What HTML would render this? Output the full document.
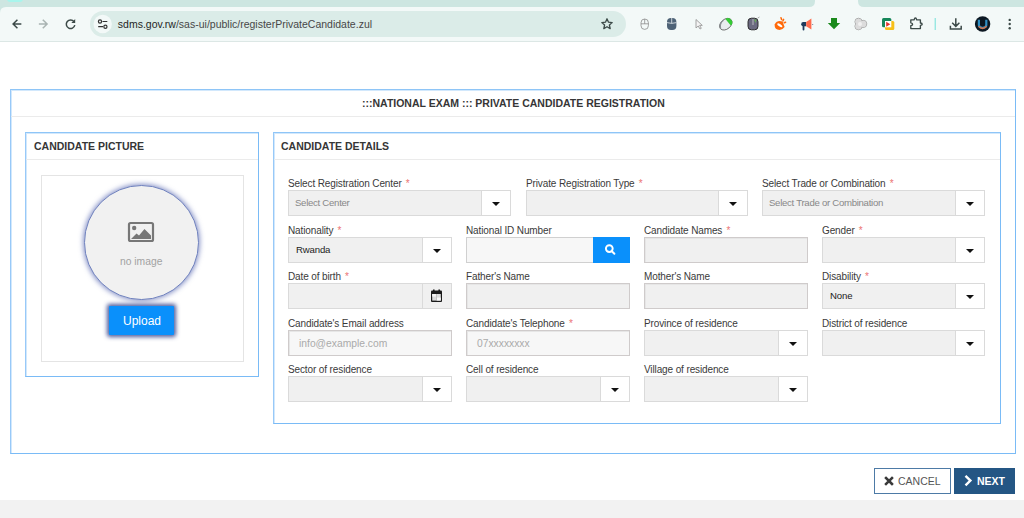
<!DOCTYPE html>
<html><head><meta charset="utf-8">
<style>
*{margin:0;padding:0;box-sizing:border-box}
html,body{width:1024px;height:518px;overflow:hidden;background:#fff;font-family:"Liberation Sans",sans-serif;position:relative}
.a{position:absolute}
#strip{left:0;top:0;width:1024px;height:7px;background:#cde6e1}
#toolbar{left:0;top:7px;width:1024px;height:35px;background:#f3f9f8;border-bottom:1px solid #dde8e6}
#url{left:90px;top:11px;width:536px;height:26px;border-radius:13px;background:#dbece8}
.panel{border:1px solid #7abbf6;border-left-color:#98c9f8;border-top-color:#8ec5f7;background:#fff;box-shadow:inset 1px 1px 0 #d2e8fc}
.sep{background:#ebebeb;height:1px}
.ttl{font-weight:bold;font-size:10.5px;color:#363636;white-space:nowrap}
.lbl{font-size:10px;letter-spacing:-0.12px;color:#3a3a3a;white-space:nowrap;line-height:11px}
.lbl b{color:#ec7474;font-weight:normal;margin-left:1.5px}
.gbtn{background:#f0f0f0}
.inp{height:26px;background:#f0f0f0;border:1px solid #dadada}
.txt{border-color:#cfcbcb;box-shadow:inset 1px 1px 0 #e6e6e6}
.btn{top:-1px;right:-1px;height:26px;width:30px;background:#fff;border:1px solid #dadada}
.btn:after{content:"";position:absolute;left:10px;top:11px;border-left:4px solid transparent;border-right:4px solid transparent;border-top:4px solid #111}
.val{font-size:9px;white-space:nowrap;line-height:10px}
.dark{font-size:9.6px;letter-spacing:-0.15px}
.ph2{color:#888;font-size:9.6px;letter-spacing:-0.28px}
.ph{color:#aaa;font-size:10.3px}
.dark{color:#222}
.lt{background:#f7f7f7}
.cal{background:#f0f0f0}
.cal:after{display:none}
.srch{background:#f7f7f7;border-color:#d0d0d0}
.sbtn{top:-1px;right:-1px;width:37px;height:26px;background:#0a90fb}
</style></head><body>
<svg class="a" style="left:0;top:0" width="1024" height="42" viewBox="0 0 1024 42">
<rect x="0" y="0" width="1024" height="42" fill="#f3f9f8"/>
<path d="M0 0H815V1Q815 7 809 7H0Z" fill="#cde6e1"/>
<path d="M858 0H1024V7H864Q858 7 858 1Z" fill="#cde6e1"/>
<path d="M0 7H6Q0 7 0 13Z" fill="#cde6e1"/>
<rect x="7" y="-4" width="16" height="6" rx="3" fill="#a8f5ec"/>
<rect x="0" y="41" width="1024" height="1" fill="#dce7e5"/>
<!-- back -->
<path d="M20.6 24H13.4M16.9 20.2L13.1 24L16.9 27.8" stroke="#3c4a48" stroke-width="1.5" fill="none" stroke-linecap="square"/>
<!-- forward -->
<path d="M39.6 24H46.8M43.3 20.2L47.1 24L43.3 27.8" stroke="#a9b4b2" stroke-width="1.5" fill="none" stroke-linecap="square"/>
<!-- reload -->
<path d="M74 21.6A4.3 4.3 0 1 0 74.8 25.2" stroke="#3c4a48" stroke-width="1.5" fill="none"/>
<path d="M75.2 19V22.9H71.3Z" fill="#3c4a48"/>
<!-- url bar -->
<rect x="90" y="11" width="536" height="26" rx="13" fill="#dbece8"/>
<circle cx="102.7" cy="24" r="9.2" fill="#f3f9f8"/>
<circle cx="100" cy="21.5" r="1.6" stroke="#333" stroke-width="1.2" fill="none"/>
<path d="M102.5 21.5H107.3M98.2 26.7H103" stroke="#333" stroke-width="1.2"/>
<circle cx="105.4" cy="26.7" r="1.6" stroke="#333" stroke-width="1.2" fill="none"/>
<text x="117.8" y="27.8" font-family="Liberation Sans" font-size="10.5" fill="#1f1f1f">sdms.gov.rw<tspan fill="#474747">/sas-ui/public/registerPrivateCandidate.zul</tspan></text>
<!-- star -->
<path d="M607 18.8L608.5 22.2L612.2 22.6L609.4 25L610.2 28.6L607 26.7L603.8 28.6L604.6 25L601.8 22.6L605.5 22.2Z" stroke="#3c4a48" stroke-width="1.3" fill="none" stroke-linejoin="round"/>
<!-- ext1 mouse outline -->
<rect x="641" y="19" width="7.4" height="10.4" rx="3.7" stroke="#8a8a8a" stroke-width="0.8" fill="none"/>
<path d="M641 23.8H648.4M644.7 19V23.8" stroke="#8a8a8a" stroke-width="0.8"/>
<!-- ext2 dark mouse -->
<rect x="667" y="18" width="9.4" height="12" rx="4" fill="#4e6377"/>
<path d="M667 22.6Q671.7 24.2 676.4 22.6M671.7 18V23.3" stroke="#e8eef0" stroke-width="0.8" fill="none"/>
<!-- ext3 cursor -->
<path d="M696 19.5V28L698.2 26L700 29L701.3 28.3L699.6 25.4H702.3Z" stroke="#9a9a9a" stroke-width="0.9" fill="#f4f4f4" stroke-linejoin="round"/>
<!-- ext4 green mouse -->
<g transform="rotate(50 725.8 24.2)"><ellipse cx="725.8" cy="24.2" rx="4.9" ry="7" fill="#e9ecef" stroke="#5a5a5a" stroke-width="0.8"/>
<path d="M721.6 21.2Q721.6 17.2 725.8 17.2Q730 17.2 730 21.2Z" fill="#33cc33"/>
<path d="M721.2 23.5Q721 28.8 725.8 31" stroke="#8a8f94" stroke-width="1.3" fill="none"/></g>
<!-- ext5 purple mouse -->
<rect x="748" y="18.2" width="10" height="11.6" rx="3.4" fill="#6b6a80" stroke="#222" stroke-width="0.9"/>
<path d="M753 19V25" stroke="#ddd" stroke-width="0.7"/>
<path d="M754 19.5L756.6 19.5L755.5 23Z" fill="#6aa85a"/>
<path d="M757.5 18.2L759.5 17" stroke="#777" stroke-width="0.6"/>
<!-- ext6 orange -->
<path d="M774.8 24.2Q777.2 19.8 782.6 21.6L784.6 27Q782 30.8 777.4 29.6Q774 28.2 774.8 24.2Z" fill="#ff6a0a"/>
<ellipse cx="779.8" cy="25.3" rx="1.2" ry="3" transform="rotate(-58 779.8 25.3)" fill="#fff"/>
<path d="M781 17.8L781.6 19.6M783.6 19.4L782.9 20.9M785.6 22.2L784.2 22.8" stroke="#ff6a0a" stroke-width="1.5" stroke-linecap="round"/>
<!-- ext7 megaphone -->
<path d="M806.2 22H803.2Q801.2 22 801.2 24.2Q801.2 26.2 803.2 26.2H806.2Z" fill="#1f3b5c"/>
<path d="M803.5 26V29.6" stroke="#1f3b5c" stroke-width="1.8" stroke-linecap="round"/>
<path d="M806.2 22L811.4 18.6V29.6L806.2 26.2Z" fill="#ff6a4c"/>
<path d="M812.6 24V24.6" stroke="#1f3b5c" stroke-width="1.2"/>
<!-- ext8 green arrow -->
<path d="M831 18H837V23H840.2L834 29.2L827.8 23H831Z" fill="#1a8a1c"/>
<!-- ext9 grey flower -->
<g fill="#dcdcdc" stroke="#9a9a9a" stroke-width="0.8"><circle cx="858.5" cy="21.8" r="3.6"/><circle cx="863.2" cy="23.9" r="3.6"/><circle cx="858.5" cy="26.2" r="3.6"/></g>
<g fill="#dcdcdc"><circle cx="858.5" cy="21.8" r="3.1"/><circle cx="863.2" cy="23.9" r="3.1"/><circle cx="858.5" cy="26.2" r="3.1"/></g>
<circle cx="860" cy="24" r="2" fill="#f0f0f0"/>
<!-- ext10 green/yellow -->
<rect x="882" y="18" width="9.3" height="9.3" rx="1.5" fill="#16875a"/>
<rect x="885" y="21" width="9.3" height="9" rx="1.5" fill="#f7c01a"/>
<rect x="885" y="21" width="6.3" height="6.3" fill="#fff"/>
<path d="M886.2 21.8L890.3 24.3L886.2 26.8Z" fill="#e0332e"/>
<!-- puzzle -->
<path d="M910.8 19.8H914.2Q914.4 18 915.4 18Q916.4 18 916.6 19.8H920.4V23Q922.2 23.2 922.2 24.2Q922.2 25.2 920.4 25.4V28.6H910.8V25.6Q912.6 25.4 912.6 24.2Q912.6 23 910.8 22.8Z" stroke="#3c4a48" stroke-width="1.35" fill="none" stroke-linejoin="round"/>
<rect x="934.6" y="18" width="1.3" height="12" fill="#8fe6df"/>
<!-- download -->
<path d="M955.8 18.2V26.2M952.2 22.8L955.8 26.4L959.4 22.8M950.4 25.8V29H961.2V25.8" stroke="#3c4a48" stroke-width="1.5" fill="none"/>
<!-- avatar -->
<circle cx="982.6" cy="24" r="7.7" fill="#0c1822"/>
<path d="M978.9 19.8V25Q978.9 27.6 982.6 27.6Q986.3 27.6 986.3 25V19.8" stroke="#2f8fc4" stroke-width="2.2" fill="none"/>
<path d="M978.6 26.2Q982.6 30.6 986.6 26.2" stroke="#d2744c" stroke-width="1.6" fill="none"/>
<path d="M982.6 20.5V26.5" stroke="#0c1822" stroke-width="1.6"/>
<!-- menu -->
<circle cx="1009.7" cy="19.9" r="1.2" fill="#3c4a48"/><circle cx="1009.7" cy="24" r="1.2" fill="#3c4a48"/><circle cx="1009.7" cy="28.2" r="1.2" fill="#3c4a48"/>
</svg>


<!-- outer panel -->
<div class="a panel" style="left:10px;top:89px;width:1006px;height:365px"></div>
<div class="a sep" style="left:11px;top:116px;width:1004px"></div>
<div class="a ttl" style="left:362px;top:97px">:::NATIONAL EXAM ::: PRIVATE CANDIDATE REGISTRATION</div>

<!-- left panel -->
<div class="a panel" style="left:25px;top:132px;width:234px;height:245px"></div>
<div class="a sep" style="left:26px;top:159px;width:232px"></div>
<div class="a ttl" style="left:34px;top:140px">CANDIDATE PICTURE</div>

<div class="a" style="left:41px;top:175px;width:203px;height:187px;border:1px solid #e4e4e4"></div>
<div class="a" style="left:84px;top:185px;width:115px;height:115px;border-radius:50%;background:#f1f1f1;border:1.6px solid #7082be;box-shadow:0 0 5px 1px rgba(60,78,165,.6)"></div>
<svg class="a" style="left:126px;top:220px" width="30" height="24" viewBox="0 0 30 24">
<rect x="3" y="3" width="24" height="18" rx="1.5" stroke="#777" stroke-width="2.2" fill="none"/>
<circle cx="8.2" cy="8" r="2.2" fill="#777"/>
<path d="M5 19L10.5 13.5L13 15.5L18.5 9L25 15.5V19Z" fill="#777"/>
</svg>
<div class="a" style="left:120px;top:256px;font-size:10.3px;line-height:11px;color:#a2a2a2;white-space:nowrap">no image</div>
<div class="a" style="left:109px;top:306px;width:65px;height:29px;background:#0a90fb;box-shadow:0 0 4px 1.5px rgba(35,50,130,.8);border-radius:1px"></div>
<div class="a" style="left:123px;top:314px;font-size:12px;line-height:14px;color:#fff;white-space:nowrap">Upload</div>

<!-- buttons -->
<div class="a" style="left:874px;top:468px;width:77px;height:26px;border:1px solid #4d7aa6;background:#fff"></div>
<svg class="a" style="left:883px;top:475px" width="12" height="12" viewBox="0 0 12 12"><path d="M3 3L9 9M9 3L3 9" stroke="#3a3a3a" stroke-width="2.5" stroke-linecap="square"/></svg>
<div class="a" style="left:898px;top:475px;font-size:10.5px;line-height:12px;color:#555;white-space:nowrap">CANCEL</div>
<div class="a" style="left:954px;top:468px;width:61px;height:26px;background:#245684"></div>
<svg class="a" style="left:962px;top:474px" width="12" height="13" viewBox="0 0 12 13"><path d="M3.5 1.8L8.4 6.6L3.5 11.4" stroke="#fff" stroke-width="2.4" fill="none"/></svg>
<div class="a" style="left:977px;top:475px;font-size:10.5px;line-height:12px;font-weight:bold;color:#fff;white-space:nowrap">NEXT</div>

<!-- right panel -->
<div class="a panel" style="left:273px;top:132px;width:728px;height:292px"></div>
<div class="a sep" style="left:274px;top:159px;width:726px"></div>
<div class="a ttl" style="left:281px;top:140px">CANDIDATE DETAILS</div>

<!-- form -->
<div class="a lbl" style="left:288px;top:178px">Select Registration Center <b>*</b></div>
<div class="a inp" style="left:288px;top:190px;width:223px"><div class="a val ph2" style="left:6px;top:7px">Select Center</div><div class="a btn"></div></div>
<div class="a lbl" style="left:526px;top:178px">Private Registration Type <b>*</b></div>
<div class="a inp" style="left:526px;top:190px;width:222px"><div class="a btn"></div></div>
<div class="a lbl" style="left:762px;top:178px">Select Trade or Combination <b>*</b></div>
<div class="a inp" style="left:762px;top:190px;width:223px"><div class="a val ph2" style="left:6px;top:7px">Select Trade or Combination</div><div class="a btn"></div></div>
<div class="a lbl" style="left:288px;top:225px">Nationality <b>*</b></div>
<div class="a inp" style="left:288px;top:237px;width:164px"><div class="a val dark" style="left:7px;top:7px">Rwanda</div><div class="a btn"></div></div>
<div class="a lbl" style="left:466px;top:225px">National ID Number</div>
<div class="a inp srch" style="left:466px;top:237px;width:164px"><div class="a sbtn"><svg class="a" style="left:0;top:0" width="37" height="26" viewBox="0 0 37 26"><circle cx="16.3" cy="11.6" r="3.4" stroke="#fff" stroke-width="1.9" fill="none"/><path d="M18.8 14.2L21.4 16.8" stroke="#fff" stroke-width="2" stroke-linecap="round"/></svg></div></div>
<div class="a lbl" style="left:644px;top:225px">Candidate Names <b>*</b></div>
<div class="a inp txt" style="left:644px;top:237px;width:164px"></div>
<div class="a lbl" style="left:822px;top:225px">Gender <b>*</b></div>
<div class="a inp" style="left:822px;top:237px;width:163px"><div class="a btn gbtn"></div></div>
<div class="a lbl" style="left:288px;top:271px">Date of birth <b>*</b></div>
<div class="a inp" style="left:288px;top:283px;width:164px"><div class="a btn cal"><svg class="a" style="left:7px;top:5px" width="13" height="14" viewBox="0 0 13 14"><rect x="1" y="1.5" width="11" height="11.5" rx="1" fill="#1b1b1b"/><rect x="3" y="0.5" width="1.6" height="2.5" fill="#1b1b1b"/><rect x="8.4" y="0.5" width="1.6" height="2.5" fill="#1b1b1b"/><rect x="2.2" y="5" width="8.6" height="6.6" fill="#dcdcdc"/><rect x="2.2" y="5" width="3.6" height="2.6" fill="#f4f4f4"/><rect x="7" y="8.6" width="3.8" height="3" fill="#fafafa"/><rect x="6.2" y="5" width="0.7" height="6.6" fill="#b8b8b8"/></svg></div></div>
<div class="a lbl" style="left:466px;top:271px">Father&#39;s Name</div>
<div class="a inp txt" style="left:466px;top:283px;width:164px"></div>
<div class="a lbl" style="left:644px;top:271px">Mother&#39;s Name</div>
<div class="a inp txt" style="left:644px;top:283px;width:164px"></div>
<div class="a lbl" style="left:822px;top:271px">Disability <b>*</b></div>
<div class="a inp" style="left:822px;top:283px;width:163px"><div class="a val dark" style="left:7px;top:7px">None</div><div class="a btn"></div></div>
<div class="a lbl" style="left:288px;top:318px">Candidate&#39;s Email address</div>
<div class="a inp txt lt" style="left:288px;top:330px;width:164px"><div class="a val ph" style="left:10px;top:8px">info@example.com</div></div>
<div class="a lbl" style="left:466px;top:318px">Candidate&#39;s Telephone <b>*</b></div>
<div class="a inp txt lt" style="left:466px;top:330px;width:164px"><div class="a val ph" style="left:10px;top:8px">07xxxxxxxx</div></div>
<div class="a lbl" style="left:644px;top:318px">Province of residence</div>
<div class="a inp" style="left:644px;top:330px;width:164px"><div class="a btn"></div></div>
<div class="a lbl" style="left:822px;top:318px">District of residence</div>
<div class="a inp" style="left:822px;top:330px;width:163px"><div class="a btn"></div></div>
<div class="a lbl" style="left:288px;top:364px">Sector of residence</div>
<div class="a inp" style="left:288px;top:376px;width:164px"><div class="a btn"></div></div>
<div class="a lbl" style="left:466px;top:364px">Cell of residence</div>
<div class="a inp" style="left:466px;top:376px;width:164px"><div class="a btn"></div></div>
<div class="a lbl" style="left:644px;top:364px">Village of residence</div>
<div class="a inp" style="left:644px;top:376px;width:164px"><div class="a btn"></div></div>

<!-- footer -->
<div class="a" style="left:0;top:500px;width:1024px;height:18px;background:#f2f2f2"></div>
</body></html>
